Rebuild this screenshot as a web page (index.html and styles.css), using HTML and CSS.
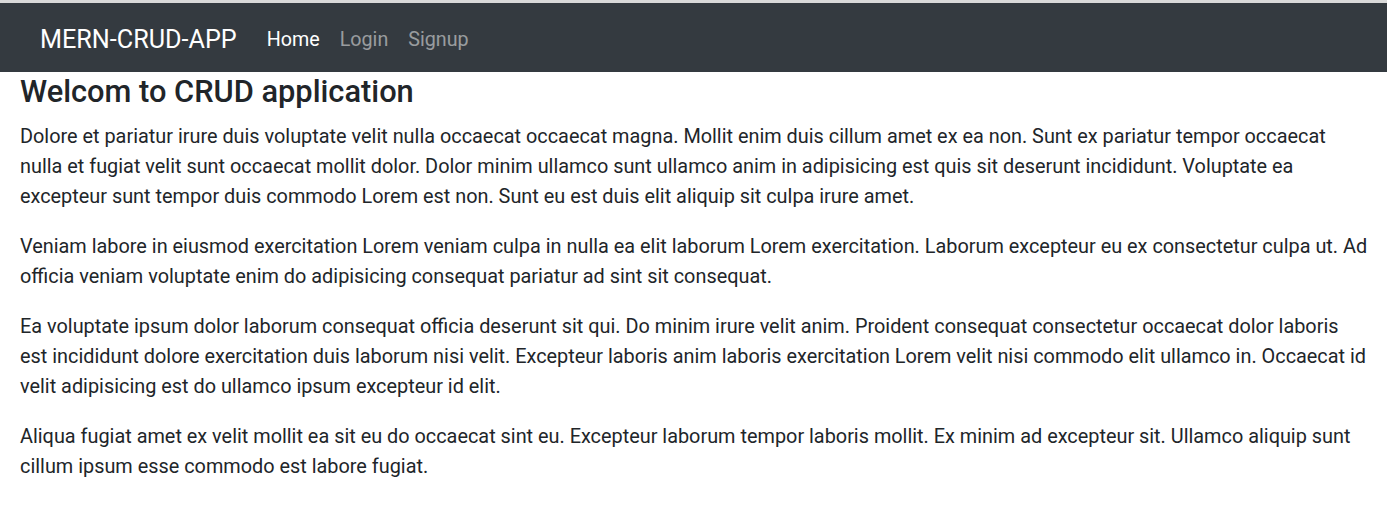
FILE: index.html
```html
<!DOCTYPE html>
<html lang="en">
<head>
<meta charset="utf-8">
<title>MERN-CRUD-APP</title>
<link rel="stylesheet" href="styles.css">
</head>
<body>
<div class="topline"></div>
<nav class="navbar">
  <a class="brand" href="#">MERN-CRUD-APP</a>
  <ul class="nav">
    <li><a class="nav-link active" href="#">Home</a></li>
    <li><a class="nav-link" href="#">Login</a></li>
    <li><a class="nav-link" href="#">Signup</a></li>
  </ul>
</nav>
<main class="content">
  <h4 class="title">Welcom to CRUD application</h4>
  <p>Dolore et pariatur irure duis voluptate velit nulla occaecat occaecat magna. Mollit enim duis cillum amet ex ea non. Sunt ex pariatur tempor occaecat nulla et fugiat velit sunt occaecat mollit dolor. Dolor minim ullamco sunt ullamco anim in adipisicing est quis sit deserunt incididunt. Voluptate ea excepteur sunt tempor duis commodo Lorem est non. Sunt eu est duis elit aliquip sit culpa irure amet.</p>
  <p>Veniam labore in eiusmod exercitation Lorem veniam culpa in nulla ea elit laborum Lorem exercitation. Laborum excepteur eu ex consectetur culpa ut. Ad officia veniam voluptate enim do adipisicing consequat pariatur ad sint sit consequat.</p>
  <p>Ea voluptate ipsum dolor laborum consequat officia deserunt sit qui. Do minim irure velit anim. Proident consequat consectetur occaecat dolor laboris est incididunt dolore exercitation duis laborum nisi velit. Excepteur laboris anim laboris exercitation Lorem velit nisi commodo elit ullamco in. Occaecat id velit adipisicing est do ullamco ipsum excepteur id elit.</p>
  <p>Aliqua fugiat amet ex velit mollit ea sit eu do occaecat sint eu. Excepteur laborum tempor laboris mollit. Ex minim ad excepteur sit. Ullamco aliquip sunt cillum ipsum esse commodo est labore fugiat.</p>
</main>
</body>
</html>
```

FILE: styles.css
```css
* { box-sizing: border-box; }
body {
  margin: 0;
  font-family: Roboto, "Noto Sans", sans-serif;
  color: #212529;
  background: #fff;
}
.topline {
  height: 3px;
  background: #d9d9d9;
}
.navbar {
  display: flex;
  align-items: center;
  height: 69px;
  padding: 4px 40px 0;
  background: #343a40;
}
.brand {
  font-size: 25.2px;
  color: #fff;
  text-decoration: none;
  margin-right: 20px;
}
.nav {
  display: flex;
  list-style: none;
  margin: 0;
  padding: 0;
}
.nav-link {
  display: block;
  padding: 0 10px;
  font-size: 19.7px;
  color: rgba(255, 255, 255, 0.5);
  text-decoration: none;
}
.nav-link.active { color: #fff; }
.content {
  padding: 0 18px 0 20px;
}
.title {
  margin: 0 0 11px;
  padding-top: 1px;
  font-size: 30.8px;
  line-height: 38px;
  font-weight: 500;
}
.content p {
  margin: 0 0 20px;
  font-size: 19.86px;
  line-height: 30px;
}
```
